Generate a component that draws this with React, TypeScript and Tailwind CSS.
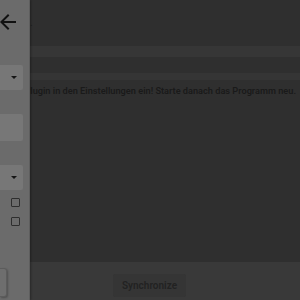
import React from 'react';

const App = () => {
  return (
    <div
      className="relative w-[300px] h-[300px] overflow-hidden bg-[#2f2f2f]"
      style={{ fontFamily: 'Roboto, "Liberation Sans", sans-serif' }}
    >
      {/* Main content (dimmed behind overlay) */}
      <div className="flex flex-col h-full">
        <div className="h-[46px] flex items-end pb-[16px] pl-[30px] text-[10px] text-[#1f1f1f]">
          .
        </div>
        <div className="h-[11px] bg-[#363636]" />
        <div className="h-[16px]" />
        <div className="h-[7px] bg-[#353535]" />
        <div className="mt-[4px] flex justify-end pr-[4px] whitespace-nowrap text-[9.2px] font-semibold text-[#1a1a1a] leading-[14px]">
          Plugin in den Einstellungen ein! Starte danach das Programm neu.
        </div>
        <div className="flex-1" />
        <div className="h-[38px] bg-[#393939] flex items-start pt-[12px] pl-[113px]">
          <div className="w-[73px] h-[23px] rounded-[2px] bg-[#353535] flex items-center justify-center text-[10px] font-semibold text-[#222222]">
            Synchronize
          </div>
        </div>
      </div>

      {/* Drawer */}
      <div className="absolute left-0 top-0 h-full w-[30px] bg-[#6b6b6b] border-r border-[#5e5e5e] shadow-[1px_0_2px_rgba(0,0,0,0.3)] flex flex-col">
        <div className="h-[44px] relative">
          <svg
            className="absolute left-[-4px] top-[10px]"
            width="24"
            height="24"
            viewBox="0 0 24 24"
            fill="#111"
          >
            <path d="M20 11H7.83l5.59-5.59L12 4l-8 8 8 8 1.41-1.41L7.83 13H20v-2z" />
          </svg>
        </div>
        <div className="mt-[21px] w-[23px] h-[25px] bg-[#777777] rounded-r-[2px] flex items-center justify-end pr-[6px]">
          <div className="w-0 h-0 border-l-[3px] border-r-[3px] border-t-[3px] border-l-transparent border-r-transparent border-t-[#151515]" />
        </div>
        <div className="mt-[24px] w-[23px] h-[27px] bg-[#777777] rounded-r-[2px]" />
        <div className="mt-[24px] w-[23px] h-[25px] bg-[#777777] rounded-r-[2px] flex items-center justify-end pr-[6px]">
          <div className="w-0 h-0 border-l-[3px] border-r-[3px] border-t-[3px] border-l-transparent border-r-transparent border-t-[#151515]" />
        </div>
        <div className="mt-[8px] flex flex-col gap-[10px] pl-[11px]">
          <div className="w-[9px] h-[9px] border-[1.5px] border-[#2e2e2e] rounded-[1px]" />
          <div className="w-[9px] h-[9px] border-[1.5px] border-[#2e2e2e] rounded-[1px]" />
        </div>
        <div className="flex-1" />
        <div className="mb-[3px] w-[7px] h-[29px] bg-[#6e6e6e] border border-l-0 border-[#5c5c5c] rounded-r-[3px] shadow-[1px_1px_2px_rgba(0,0,0,0.25)]" />
      </div>
    </div>
  );
};

export default App;
